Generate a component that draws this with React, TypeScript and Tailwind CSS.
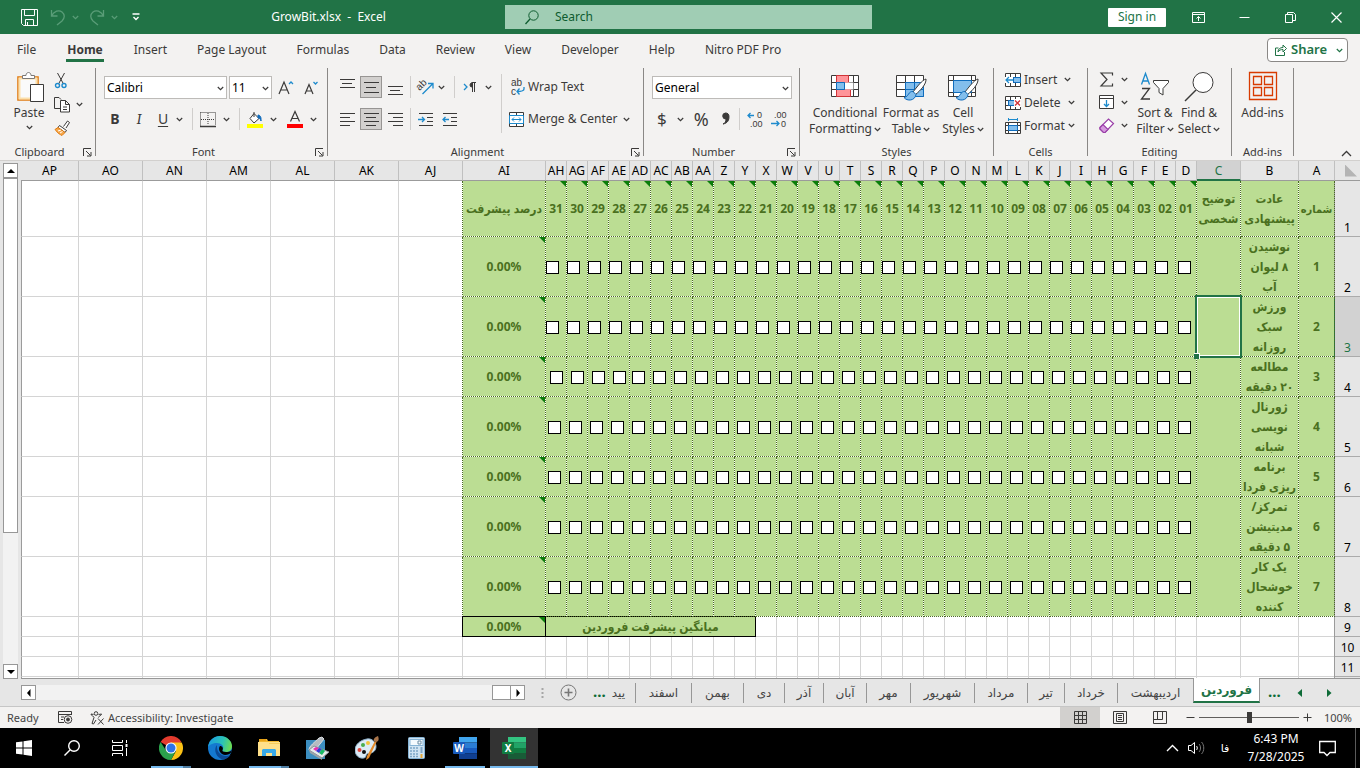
import type { ReactNode } from "react";
import { useState } from "react";

const DAY_COLS = ["D", "E", "F", "G", "H", "I", "J", "K", "L", "M", "N", "O", "P", "Q", "R", "S", "T", "U", "V", "W", "X", "Y", "Z", "AA", "AB", "AC", "AD", "AE", "AF", "AG", "AH"];
const EMPTY_COLS = ["AJ", "AK", "AL", "AM", "AN", "AO", "AP"];
const MENU = ["File", "Home", "Insert", "Page Layout", "Formulas", "Data", "Review", "View", "Developer", "Help", "Nitro PDF Pro"];

const HABITS = [
  { lines: ["نوشیدن", "۸ لیوان", "آب"], height: "h-[60px]", shift: "pl-0" },
  { lines: ["ورزش", "سبک", "روزانه"], height: "h-[60px]", shift: "pl-0" },
  { lines: ["مطالعه", "۲۰ دقیقه"], height: "h-[40px]", shift: "pl-[2px]" },
  { lines: ["ژورنال", "نویسی", "شبانه"], height: "h-[60px]", shift: "pl-[2px]" },
  { lines: ["برنامه", "ریزی فردا"], height: "h-[40px]", shift: "pl-[2px]" },
  { lines: ["تمرکز/", "مدیتیشن", "۵ دقیقه"], height: "h-[60px]", shift: "pl-[2px]" },
  { lines: ["یک کار", "خوشحال", "کننده"], height: "h-[60px]", shift: "pl-[2px]" },
];

const SHEETS = [
  { name: "اردیبهشت", width: "w-[76px]" },
  { name: "خرداد", width: "w-[53px]" },
  { name: "تیر", width: "w-[37px]" },
  { name: "مرداد", width: "w-[53px]" },
  { name: "شهریور", width: "w-[64px]" },
  { name: "مهر", width: "w-[44px]" },
  { name: "آبان", width: "w-[43px]" },
  { name: "آذر", width: "w-[39px]" },
  { name: "دی", width: "w-[41px]" },
  { name: "بهمن", width: "w-[52px]" },
  { name: "اسفند", width: "w-[56px]" },
];

const GREEN_CELL = "relative border-r border-b border-dotted border-[#4a6a24] bg-[#bbdd93] bg-clip-padding p-0 text-center align-middle font-bold text-[#4a7020]";
const PLAIN_CELL = "border-r border-b border-[#d4d4d4] p-0";

function Svg({ w, h, children, className = "" }: { w: number; h: number; children: ReactNode; className?: string }) {
  return (
    <svg width={w} height={h} viewBox={`0 0 ${w} ${h}`} fill="none" stroke="#3b3a39" className={`shrink-0 overflow-visible ${className}`} aria-hidden="true">
      {children}
    </svg>
  );
}

function Caret({ className = "" }: { className?: string }) {
  return (
    <Svg w={7} h={5} className={className}>
      <path d="M.8 1l2.7 2.7L6.2 1" stroke="currentColor" strokeWidth="1.2" />
    </Svg>
  );
}

function Glyph({ x, y, size = 9, children }: { x: number; y: number; size?: number; children: string }) {
  return (
    <text x={x} y={y} fontSize={size} fill="#3b3a39" stroke="none" fontFamily="Liberation Sans">
      {children}
    </text>
  );
}

function Sep() {
  return <div className="h-[22px] w-px shrink-0 bg-[#d0cecc]" />;
}

function Group({ label, width, launcher, children }: { label: string; width: string; launcher?: boolean; children: ReactNode }) {
  return (
    <section className={`flex shrink-0 items-start ${width}`} aria-label={label}>
      <div className="h-[92px] min-w-0 flex-1">
        <div className="h-[76px]">{children}</div>
        <div className="flex h-4 items-center text-[11px] leading-4">
          <span className="flex-1 text-center">{label}</span>
          {launcher && (
            <button aria-label={`${label} settings`} className="flex w-4 justify-center">
              <Svg w={9} h={9}>
                <path d="M.5 8V.5H8M3 3l4.500 4.500M8 4v4H4" />
              </Svg>
            </button>
          )}
        </div>
      </div>
      <div className="h-[88px] w-px bg-[#8a8886]" />
    </section>
  );
}

function BigButton({ lines, width, icon, caret = true }: { lines: string[]; width: string; icon: ReactNode; caret?: boolean }) {
  return (
    <button className={`flex flex-col items-center whitespace-nowrap pt-1 leading-4 ${width}`}>
      <span className="flex h-[33px] items-start">{icon}</span>
      {lines.map((line, i) => (
        <span key={line} className="flex items-center gap-0.5">
          {line}
          {caret && i === lines.length - 1 && <Caret />}
        </span>
      ))}
    </button>
  );
}

function AlignIcon({ rows }: { rows: string }) {
  return (
    <Svg w={15} h={14}>
      <path d={rows} />
    </Svg>
  );
}

function Brush() {
  return (
    <g>
      <path d="M30 7c-4 1-9 8-13 13l2.500 2.500c5-4 11-10.500 10.500-15.500z" fill="#fff" stroke="#3b3a39" />
      <path d="M17 19.500c-5-.5-4 5.500-9 6 3 4 11 3.500 12-3z" fill="#83beec" stroke="#0f6cbd" />
    </g>
  );
}

function TitleBar() {
  return (
    <header className="flex h-[34px] shrink-0 items-center bg-[#217346] text-white">
      <div className="flex w-[505px] shrink-0 items-center pl-[21px]">
        <button aria-label="Save">
          <Svg w={17} h={17}>
            <path d="M.5.5h16v16h-14l-2-2zM3.500.5v6h10v-6M4.500 16v-5.500h8V16M6.500 13v3" stroke="#fff" />
          </Svg>
        </button>
        <button aria-label="Undo" className="ml-3 flex items-center gap-1.5 text-[#5a9d78]">
          <Svg w={16} h={17}>
            <path d="M1.500 1v6h6M1.500 7C4 2 9 .5 12 3s3 6 0 9l-5 4" stroke="#5a9d78" strokeWidth="1.300" />
          </Svg>
          <Caret />
        </button>
        <button aria-label="Redo" className="ml-2.5 flex items-center gap-1.5 text-[#5a9d78]">
          <Svg w={16} h={17}>
            <path d="M14.500 1v6h-6M14.500 7C12 2 7 .5 4 3s-3 6 0 9l5 4" stroke="#5a9d78" strokeWidth="1.300" />
          </Svg>
          <Caret />
        </button>
        <button aria-label="Customize toolbar" className="ml-3.5">
          <Svg w={8} h={8}>
            <path d="M.5 1h7M1.500 4L4 6.500 6.500 4" stroke="#fff" strokeWidth="1.400" />
          </Svg>
        </button>
        <h1 className="flex-1 whitespace-pre pl-3 text-center text-[12px] font-normal">{"GrowBit.xlsx  -  Excel"}</h1>
      </div>
      <label className="flex h-6 w-[367px] shrink-0 items-center gap-4 bg-[#a0cdb4] pl-5">
        <Svg w={14} h={15}>
          <circle cx="8.500" cy="5.500" r="4.700" stroke="#0e5c2f" />
          <path d="M5 9L.5 14" stroke="#0e5c2f" strokeWidth="1.300" />
        </Svg>
        <input aria-label="Search" placeholder="Search" className="w-full bg-transparent text-[12px] text-[#0e5c2f] outline-none placeholder:text-[#0e5c2f]" />
      </label>
      <div className="ml-auto flex items-center pr-[18px]">
        <button className="h-[19px] w-[58px] rounded-[1px] bg-white text-[12px] leading-4 text-[#217346]">Sign in</button>
        <button aria-label="Ribbon display options" className="ml-[26px]">
          <Svg w={13} h={11}>
            <path d="M.5.5h12v10H.5zM.5 2.500h12M6.500 9V4.500M4.500 6.500l2-2 2 2" stroke="#fff" />
          </Svg>
        </button>
        <button aria-label="Minimize" className="ml-[34px]">
          <Svg w={11} h={11}>
            <path d="M.5 5.500h10" stroke="#fff" />
          </Svg>
        </button>
        <button aria-label="Restore" className="ml-[35px]">
          <Svg w={11} h={11}>
            <path d="M.5 2.500h7v8h-7zM2.500 2.500v-2h6l2 2v6h-3" stroke="#fff" />
          </Svg>
        </button>
        <button aria-label="Close" className="ml-[35px]">
          <Svg w={11} h={11}>
            <path d="M.5.5l10 10M10.500.5l-10 10" stroke="#fff" strokeWidth="1.200" />
          </Svg>
        </button>
      </div>
    </header>
  );
}

function Menu() {
  return (
    <nav className="flex h-8 shrink-0 items-center pl-[17px] pr-3 text-[12px]">
      <div className="flex gap-[30px]">
        {MENU.map((item) =>
          item === "Home" ? (
            <a key={item} href="#home" className="relative px-px font-bold leading-6">
              {item}
              <span className="absolute inset-x-0 bottom-0 h-[3px] bg-[#217346]" />
            </a>
          ) : (
            <a key={item} href={`#${item}`} className="leading-6">
              {item}
            </a>
          )
        )}
      </div>
      <button className="ml-auto flex h-6 w-[81px] items-center rounded border border-[#8a8886] bg-white pl-[7px] text-[13px] font-semibold text-[#217346]">
        <Svg w={12} h={12}>
          <path d="M3.500 4H.5v7.500h9V8M3 8c0-3 2-4.500 5-4.500V1l3.500 3.500L8 8V5.500C6 5.500 4 6 3 8z" stroke="#217346" />
        </Svg>
        <span className="ml-1">Share</span>
        <Caret className="ml-auto mr-1" />
      </button>
    </nav>
  );
}

function ClipboardGroup() {
  return (
    <Group label="Clipboard" width="w-[96px]" launcher>
      <div className="flex">
        <button className="flex w-[54px] flex-col items-center pl-1 pt-1 leading-4">
          <span className="flex h-[33px] pl-1">
            <Svg w={28} h={31}>
              <path d="M1 5h20v23H1z" fill="#fafafa" stroke="#e07b12" strokeWidth="1.600" />
              <path d="M2.500 6.500h17v20h-17z" stroke="#fbe0ac" strokeWidth="2" />
              <path d="M5.500 6.500v-3H9c0-4 5-4 5 0h3.500v3z" fill="#fff" stroke="#7a7977" />
              <path d="M13.500 12.500h13v17h-13z" fill="#fff" />
            </Svg>
          </span>
          Paste
          <Caret className="mt-1" />
        </button>
        <div>
          <button aria-label="Cut" className="flex h-6 items-center">
            <Svg w={14} h={17}>
              <path d="M3.500 1l6 11M10.500 1l-6 11" />
              <circle cx="3.500" cy="13.500" r="2" stroke="#1e8bcd" strokeWidth="1.400" />
              <circle cx="10" cy="13.500" r="2" stroke="#1e8bcd" strokeWidth="1.400" />
            </Svg>
          </button>
          <button aria-label="Copy" className="flex h-6 items-center gap-1.5">
            <Svg w={16} h={17}>
              <path d="M6 12.500H.5V1.500H5l2 2" />
              <path d="M6.500 4.500h5l4 4v7.500h-9zM11.500 4.500v4h4M9 11h4M9 13.500h4" fill="#fff" />
            </Svg>
            <Caret />
          </button>
          <button aria-label="Format Painter" className="flex h-6 items-center">
            <Svg w={16} h={16}>
              <path d="M9.500 6.500L13.500 1l2 1.500-3.500 5.500" fill="#fff" />
              <path d="M5.500 5.500l7 5-1.500 2-7-5z" fill="#fff" />
              <path d="M4 7.500L1 9.500c1 1 2 3.500 7 6l3-3z" fill="#f7a94c" stroke="#e07b12" />
              <path d="M4 11l3-1M6 13l2.500-1.500" stroke="#fff" />
            </Svg>
          </button>
        </div>
      </div>
    </Group>
  );
}

function FontGroup() {
  return (
    <Group label="Font" width="w-[232px]" launcher>
      <div className="flex flex-col gap-[9px] pl-2 pt-2">
        <div className="flex h-[23px] items-center">
          <div className="relative">
            <select aria-label="Font name" className="block h-[23px] w-[123px] appearance-none border border-[#bdbbb8] bg-white pl-0.5 text-black">
              <option>Calibri</option>
            </select>
            <Caret className="absolute right-[3px] top-[10px]" />
          </div>
          <div className="relative ml-0.5">
            <select aria-label="Font size" className="block h-[23px] w-[43px] appearance-none border border-[#bdbbb8] bg-white pl-0.5 text-black">
              <option>11</option>
            </select>
            <Caret className="absolute right-[3px] top-[10px]" />
          </div>
          <button aria-label="Increase font size" className="ml-1.5">
            <Svg w={16} h={16}>
              <path d="M1 14L6 2l5 12M2.500 10h7" strokeWidth="1.200" />
              <path d="M11 4l2-2 2 2" stroke="#1e8bcd" strokeWidth="1.300" />
            </Svg>
          </button>
          <button aria-label="Decrease font size" className="ml-2.5">
            <Svg w={16} h={16}>
              <path d="M1 14L5 4.500 9 14M2.500 11h5" strokeWidth="1.200" />
              <path d="M9.500 2l2 2 2-2" stroke="#1e8bcd" strokeWidth="1.300" />
            </Svg>
          </button>
        </div>
        <div className="flex h-[22px] items-center">
          <button className="w-[22px] text-[14px] font-bold leading-5">B</button>
          <button className="ml-0.5 w-[22px] font-serif text-[15px] italic leading-5">I</button>
          <button className="ml-0.5 w-[22px] text-[14px] leading-5 underline underline-offset-2">U</button>
          <Caret className="ml-0.5" />
          <span className="pl-[9px]"><Sep /></span>
          <button aria-label="Borders" className="ml-[7px] flex items-center gap-[7px]">
            <Svg w={16} h={15}>
              <path d="M.5.5h15v13M.5.5v13M8 1v12M1 7.500h14" strokeDasharray="1 1" />
              <path d="M0 14.500h16" strokeWidth="1.500" />
            </Svg>
            <Caret />
          </button>
          <span className="pl-[9px]"><Sep /></span>
          <button aria-label="Fill color" className="ml-[7px] flex items-center gap-[7px]">
            <Svg w={16} h={17}>
              <path d="M7 2.500l5 5-5 4.500-4-4.500zM7 6V1" fill="#fff" />
              <path d="M11 4c2 0 3.500 2 3 6-1-3-2-3-3-3z" fill="#0f6cbd" stroke="#0f6cbd" />
              <path d="M0 15h16" stroke="#ff0" strokeWidth="4" />
            </Svg>
            <Caret />
          </button>
          <button aria-label="Font color" className="ml-2.5 flex items-center gap-[7px]">
            <Svg w={16} h={17}>
              <path d="M3.500 10.500L8 .5l4.500 10M5 7.500h6" strokeWidth="1.200" />
              <path d="M0 15h16" stroke="red" strokeWidth="4" />
            </Svg>
            <Caret />
          </button>
        </div>
      </div>
    </Group>
  );
}

function AlignmentGroup() {
  return (
    <Group label="Alignment" width="w-[316px]" launcher>
      <div className="flex">
        <div className="flex w-[173px] flex-col gap-[10px] pl-2 pt-2">
          <div className="flex h-[22px] items-center">
            <button aria-label="Top align" className="flex h-[22px] w-[22px] justify-center"><AlignIcon rows="M0 3.500h15M2 7.500h10M0 11.500h15" /></button>
            <button aria-label="Middle align" className="ml-[2px] flex h-[22px] w-[22px] items-center justify-center border border-[#979593] bg-[#d2d0ce]"><AlignIcon rows="M0 2.500h15M2 7.500h10M0 12.500h15" /></button>
            <button aria-label="Bottom align" className="ml-[2px] flex h-[22px] w-[22px] items-end justify-center"><AlignIcon rows="M0 2.500h15M2 6.500h10M0 10.500h15" /></button>
            <span className="pl-1"><Sep /></span>
            <button aria-label="Orientation" className="ml-1.5 flex items-center gap-1">
              <Svg w={17} h={16}>
                <g transform="rotate(-45 6 7)"><Glyph x={0} y={8} size={10}>ab</Glyph></g>
                <path d="M5.500 15l10-10M11 4.500h5v5" stroke="#1e8bcd" strokeWidth="1.300" />
              </Svg>
              <Caret />
            </button>
            <span className="pl-[9px]"><Sep /></span>
            <button aria-label="Text direction" className="ml-2 flex items-center gap-2">
              <Svg w={14} h={10}>
                <path d="M1 2l3 3-3 3" stroke="#1e8bcd" strokeWidth="1.300" />
                <path d="M9 1a2 2 0 000 4z" fill="#3b3a39" />
                <path d="M9.500.5V10M11.500.5V10M8.500.5H13" />
              </Svg>
              <Caret />
            </button>
          </div>
          <div className="flex h-[22px] items-center">
            <button aria-label="Align left" className="flex h-[22px] w-[22px] items-center justify-center"><AlignIcon rows="M0 1.500h15M0 5.500h10M0 9.500h15M0 13.500h10" /></button>
            <button aria-label="Center" className="ml-[2px] flex h-[22px] w-[22px] items-center justify-center border border-[#979593] bg-[#d2d0ce]"><AlignIcon rows="M0 1.500h15M2 5.500h10M0 9.500h15M2 13.500h10" /></button>
            <button aria-label="Align right" className="ml-[2px] flex h-[22px] w-[22px] items-center justify-center"><AlignIcon rows="M0 1.500h15M5 5.500h10M0 9.500h15M5 13.500h10" /></button>
            <span className="pl-1"><Sep /></span>
            <button aria-label="Increase indent" className="ml-[7px]">
              <Svg w={16} h={14}>
                <path d="M1 1.500h14M9 5.500h6M9 9.500h6M1 13.500h14" />
                <path d="M0 7.500h6M4 5l2.500 2.500L4 10" stroke="#1e8bcd" strokeWidth="1.300" />
              </Svg>
            </button>
            <button aria-label="Decrease indent" className="ml-2">
              <Svg w={16} h={14}>
                <path d="M1 1.500h14M9 5.500h6M9 9.500h6M1 13.500h14" />
                <path d="M1 7.500h6M3.500 5L1 7.500 3.500 10" stroke="#1e8bcd" strokeWidth="1.300" />
              </Svg>
            </button>
          </div>
        </div>
        <div className="mt-1.5 h-[59px] w-px bg-[#d0cecc]" />
        <div className="flex flex-col gap-[10px] pl-[7px] pt-2">
          <button className="flex h-[22px] items-center gap-[3px]">
            <Svg w={16} h={18}>
              <Glyph x={2} y={8} size={10}>ab</Glyph>
              <Glyph x={2} y={17} size={10}>c</Glyph>
              <path d="M15 9v2c0 2-2 2.500-7 2.500M10.500 10.500L8 13.500l2.500 3" stroke="#1e8bcd" strokeWidth="1.300" />
            </Svg>
            Wrap Text
          </button>
          <button className="flex h-[22px] items-center gap-[3px]">
            <Svg w={16} h={15}>
              <path d="M.5.5h14v14H.5zM.5 3.500h14M.5 11.500h14M7.500.5v3M7.500 11.500v3" fill="#fff" />
              <path d="M.5 3.500h14v8H.5zM3 7.500h9M5 5.500l-2 2 2 2M10 5.500l2 2-2 2" stroke="#1e8bcd" />
            </Svg>
            Merge &amp; Center
            <Caret className="ml-0.5" />
          </button>
        </div>
      </div>
    </Group>
  );
}

function NumberGroup() {
  return (
    <Group label="Number" width="w-[156px]" launcher>
      <div className="flex flex-col gap-[9px] pl-2 pt-2">
        <div className="relative w-[140px]">
          <select aria-label="Number format" className="block h-[23px] w-full appearance-none border border-[#bdbbb8] bg-white pl-0.5 text-black">
            <option>General</option>
          </select>
          <Caret className="absolute right-[3px] top-[10px]" />
        </div>
        <div className="flex h-[22px] items-center">
          <button aria-label="Accounting format" className="flex items-center pl-[5px] text-[17px] leading-5">
            $<Caret className="ml-2.5" />
          </button>
          <button className="ml-2.5 text-[18px] leading-5">%</button>
          <button aria-label="Comma style" className="ml-3">
            <Svg w={9} h={14}>
              <path d="M4.500 1a3 3 0 10.500 6c0 3-1 4-3 5 5-1 6-4 6-7.500C8 2 6.500 1 4.500 1z" fill="#3b3a39" />
            </Svg>
          </button>
          <span className="pl-[9px]"><Sep /></span>
          <button aria-label="Increase decimal" className="ml-[7px]">
            <Svg w={17} h={17}>
              <Glyph x={10} y={7}>0</Glyph>
              <Glyph x={3} y={16}>.00</Glyph>
              <path d="M1 4.500h6M3.500 2L1 4.500 3.500 7" stroke="#1e8bcd" strokeWidth="1.300" />
            </Svg>
          </button>
          <button aria-label="Decrease decimal" className="ml-[7px]">
            <Svg w={17} h={17}>
              <Glyph x={3} y={7}>.00</Glyph>
              <Glyph x={10} y={16}>0</Glyph>
              <path d="M0 12.500h8M5.500 10L8 12.500 5.500 15" stroke="#1e8bcd" strokeWidth="1.300" />
            </Svg>
          </button>
        </div>
      </div>
    </Group>
  );
}

function StylesGroup() {
  return (
    <Group label="Styles" width="w-[194px]">
      <div className="flex pl-[5px]">
        <BigButton
          lines={["Conditional", "Formatting"]}
          width="w-[80px]"
          icon={
            <Svg w={28} h={26}>
              <path d="M.5 3.500h27v21H.5zM.5 10.500h27M.5 17.500h27M5.500 3.500v21M22.500 3.500v21" fill="#fff" />
              <path d="M5.500 3.500h12v7h-12zM5.500 17.500h14v7h-14z" fill="#ff9499" stroke="#d13438" />
              <path d="M5.500 10.500h8v7h-8z" fill="#83beec" stroke="#0f6cbd" />
              <path d="M14 10.500h8.500v7H14z" fill="#fff" stroke="none" />
            </Svg>
          }
        />
        <BigButton
          lines={["Format as", "Table"]}
          width="w-[52px]"
          icon={
            <Svg w={31} h={31}>
              <path d="M.5 3.500h27v21H.5zM.5 10.500h27M.5 17.500h27M9.500 3.500v21M18.500 3.500v21" fill="#fff" />
              <path d="M9.500 10.500h18v14h-18zM9.500 17.500h18M18.500 10.500v14" fill="#83beec" stroke="#0f6cbd" />
              <Brush />
            </Svg>
          }
        />
        <BigButton
          lines={["Cell", "Styles"]}
          width="w-[52px]"
          icon={
            <Svg w={31} h={31}>
              <path d="M.5 3.500h27v21H.5zM.5 8.500h27M5.500 3.500v21M23.500 3.500v21M.5 20.500h27" fill="#fff" />
              <path d="M5.500 8.500h18v12h-18z" fill="#83beec" stroke="#0f6cbd" />
              <Brush />
            </Svg>
          }
        />
      </div>
    </Group>
  );
}

function CellsGroup() {
  return (
    <Group label="Cells" width="w-[94px]">
      <div className="pl-[11px]">
        <button className="flex h-[23px] items-center gap-[3px]">
          <Svg w={16} h={14}>
            <path d="M.5.5h15v13H.5zM.5 4.500h15M.5 9.500h15M5.500.5v13M10.500.5v13" fill="#fff" />
            <path d="M8.500 4.500h7v5h-7z" fill="#83beec" stroke="#0f6cbd" />
            <path d="M0 4h8v6H0z" fill="#fff" stroke="none" />
            <path d="M1 7h7M4 4L1 7l3 3" stroke="#1e8bcd" strokeWidth="1.300" />
          </Svg>
          Insert
          <Caret className="ml-1" />
        </button>
        <button className="flex h-[23px] items-center gap-[3px]">
          <Svg w={16} h={14}>
            <path d="M.5.5h15v13H.5zM.5 4.500h15M.5 9.500h15M5.500.5v13M10.500.5v13" fill="#fff" />
            <path d="M3.500 4.500h6v5h-6z" fill="#83beec" stroke="#0f6cbd" />
            <path d="M9 3h7v8H9z" fill="#fff" stroke="none" />
            <path d="M10 4.500l5 5M15 4.500l-5 5" stroke="#d13438" strokeWidth="1.300" />
          </Svg>
          Delete
          <Caret className="ml-1" />
        </button>
        <button className="flex h-[23px] items-center gap-[3px]">
          <Svg w={16} h={16}>
            <path d="M.5 4.500h15v11H.5zM.5 7.500h15M.5 12.500h15M3.500 4.500v11M12.500 4.500v11" fill="#fff" />
            <path d="M3.500 7.500h9v5h-9z" fill="#83beec" stroke="#0f6cbd" />
            <path d="M3 1.500h10M3.500 0v3M12.500 0v3" stroke="#1e8bcd" />
          </Svg>
          Format
          <Caret />
        </button>
      </div>
    </Group>
  );
}

function EditingGroup() {
  return (
    <Group label="Editing" width="w-[144px]">
      <div className="flex">
        <div className="w-[45px] pl-[11px]">
          <button aria-label="AutoSum" className="flex h-[23px] items-center gap-1.5">
            <Svg w={16} h={15}>
              <path d="M13.500 3.500v-2.500H2l6 6.500-6 6.500h11.500v-2.500" strokeWidth="1.200" />
            </Svg>
            <Caret />
          </button>
          <button aria-label="Fill" className="flex h-[23px] items-center gap-1.5">
            <Svg w={16} h={15}>
              <path d="M.5.5h14v13H.5zM.5 3.500h14" fill="#fff" />
              <path d="M7.500 5v6.500M5 9l2.500 2.500L10 9" stroke="#1e8bcd" strokeWidth="1.300" />
            </Svg>
            <Caret />
          </button>
          <button aria-label="Clear" className="flex h-[23px] items-center gap-1.5">
            <Svg w={16} h={16}>
              <path d="M1 9.500L9.500 1l5 4.500L6 14.500H4.500L1 11z" fill="#fff" stroke="#9a3fa8" strokeWidth="1.200" />
              <path d="M1 9.500l3-3 5 5-3 3H4.500L1 11z" fill="#d59ade" stroke="#9a3fa8" strokeWidth="1.200" />
            </Svg>
            <Caret />
          </button>
        </div>
        <BigButton
          lines={["Sort &", "Filter"]}
          width="w-[44px]"
          icon={
            <Svg w={30} h={29}>
              <path d="M1.500 12.500l4-11 4 11M3 9h5" stroke="#1e8bcd" strokeWidth="1.300" />
              <path d="M2 16.500h7.500L1.500 27H10" strokeWidth="1.300" />
              <path d="M13.500 8.500h15v2l-5.500 6v6.500l-4-2.500v-4l-5.500-6z" fill="#fff" />
            </Svg>
          }
        />
        <BigButton
          lines={["Find &", "Select"]}
          width="w-[44px]"
          icon={
            <Svg w={30} h={31}>
              <circle cx="19" cy="10.500" r="10" fill="#fff" />
              <path d="M12 18L1 29" strokeWidth="1.400" />
            </Svg>
          }
        />
      </div>
    </Group>
  );
}

function Ribbon() {
  return (
    <div className="flex h-[95px] shrink-0 border-b border-[#d2d0ce] pt-0.5 text-[12px]">
      <ClipboardGroup />
      <FontGroup />
      <AlignmentGroup />
      <NumberGroup />
      <StylesGroup />
      <CellsGroup />
      <EditingGroup />
      <Group label="Add-ins" width="w-[62px]">
        <BigButton
          lines={["Add-ins"]}
          width="w-full"
          caret={false}
          icon={
            <Svg w={28} h={28}>
              <path d="M.5.5h27v27H.5zM4.500 4.500h8v8h-8zM15.500 4.500h8v8h-8zM4.500 15.500h8v8h-8zM15.500 15.500h8v8h-8z" stroke="#d83b01" strokeWidth="1.300" />
            </Svg>
          }
        />
      </Group>
      <button aria-label="Collapse ribbon" className="mb-[3px] ml-auto mr-2 self-end">
        <Svg w={11} h={7}>
          <path d="M1 6l4.500-4.500L10 6" strokeWidth="1.300" />
        </Svg>
      </button>
    </div>
  );
}

function ErrorMark() {
  return <span className="absolute right-0 top-0 h-[6px] w-[6px] bg-[#0a7d0a] [clip-path:polygon(0_0,100%_0,100%_100%)]" />;
}

function EmptyCells({ green }: { green?: boolean }) {
  return (
    <>
      {EMPTY_COLS.map((col) => (
        <td
          key={col}
          className={
            col === "AP"
              ? `${PLAIN_CELL} border-l border-l-[#9b9b9b]`
              : green && col === "AJ"
                ? "border-r border-b border-[#d4d4d4] border-r-[#4a6a24] p-0 [border-right-style:dotted]"
                : PLAIN_CELL
          }
        />
      ))}
    </>
  );
}

function RowHeader({ n, active }: { n: number; active?: boolean }) {
  return (
    <th
      scope="row"
      className={
        active
          ? "relative border-b border-[#ababab] bg-[#d2d2d2] p-0 align-bottom text-[12px] font-normal leading-4 text-[#217346] shadow-[-2px_0_0_#217346]"
          : "relative border-b border-[#ababab] bg-[#e6e6e6] p-0 align-bottom text-[12px] font-normal leading-4 text-black shadow-[-1px_0_0_#9b9b9b]"
      }
    >
      {n > 11 ? "" : n}
    </th>
  );
}

function Grid() {
  const [checked, setChecked] = useState<Record<string, boolean>>({});
  const head = "border-r border-b border-r-[#c0c0c0] border-b-[#9b9b9b] bg-[#e6e6e6] p-0 text-center font-normal";

  return (
    <table dir="rtl" className="w-full table-fixed border-separate border-spacing-0 bg-white font-['Noto_Sans','DejaVu_Sans_Condensed','DejaVu_Sans',sans-serif] text-[12px] leading-[18px]">
      <colgroup>
        <col className="w-[25px]" />
        <col className="w-[36px]" />
        <col className="w-[58px]" />
        <col className="w-[44px]" />
        {DAY_COLS.map((c) => (
          <col key={c} className="w-[21px]" />
        ))}
        <col className="w-[83px]" />
        {EMPTY_COLS.map((c) => (
          <col key={c} className={c === "AP" ? "" : "w-[64px]"} />
        ))}
      </colgroup>
      <thead>
        <tr className="h-5 text-black">
          <th className="border-b border-[#9b9b9b] bg-[#e6e6e6] p-0" aria-label="Select all">
            <span className="ml-auto mr-[3px] block h-3 w-3 bg-[#b4b4b4] [clip-path:polygon(0_0,0_100%,100%_100%)]" />
          </th>
          <th className={head}>A</th>
          <th className={head}>B</th>
          <th className="border-r border-b-2 border-r-[#c0c0c0] border-b-[#217346] bg-[#d2d2d2] p-0 text-center font-normal leading-[17px] text-[#217346]">C</th>
          {DAY_COLS.map((c) => (
            <th key={c} className={head}>
              <span className="-mx-1">{c}</span>
            </th>
          ))}
          <th className={head}>AI</th>
          {EMPTY_COLS.map((c) => (
            <th key={c} className={head}>{c}</th>
          ))}
        </tr>
      </thead>
      <tbody>
        <tr className="h-[56px]">
          <RowHeader n={1} />
          <td className={`${GREEN_CELL} text-[11px]`}>شماره</td>
          <td className={`${GREEN_CELL} leading-5`}>عادت<br />پیشنهادی</td>
          <td className={`${GREEN_CELL} leading-5`}>توضیح<br />شخصی</td>
          {DAY_COLS.map((c, i) => (
            <td key={c} className={GREEN_CELL}>
              <ErrorMark />
              {String(i + 1).padStart(2, "0")}
            </td>
          ))}
          <td className={`${GREEN_CELL} whitespace-nowrap`}>درصد پیشرفت</td>
          <EmptyCells green />
        </tr>
        {HABITS.map((habit, row) => (
          <tr key={row} className={habit.height}>
            <RowHeader n={row + 2} active={row === 1} />
            <td className={GREEN_CELL}>{row + 1}</td>
            <td className={`${GREEN_CELL} whitespace-nowrap`}>
              <div className="-my-px leading-5">
                {habit.lines.map((line) => (
                  <div key={line}>{line}</div>
                ))}
              </div>
            </td>
            <td className={GREEN_CELL}>
              {row === 1 && (
                <div className="absolute -inset-0.5 z-10 border-2 border-[#217346] shadow-[inset_0_0_0_1px_#fff]">
                  <span className="absolute -bottom-[3px] -left-[3px] h-[6px] w-[6px] border-r border-t border-white bg-[#217346]" />
                </div>
              )}
            </td>
            {DAY_COLS.map((c, i) => {
              const id = `${c}${row + 2}`;
              const shift = i === 0 ? "pl-[2px]" : row === 2 && i > 26 ? "pl-[4px]" : habit.shift;
              return (
                <td key={c} className={GREEN_CELL}>
                  <div dir="ltr" className={`flex pt-0.5 ${shift}`}>
                    <input
                      type="checkbox"
                      aria-label={id}
                      checked={!!checked[id]}
                      onChange={(e) => setChecked({ ...checked, [id]: e.target.checked })}
                      className="block h-[13px] w-[13px] shrink-0 appearance-none border border-black bg-white checked:bg-black"
                    />
                  </div>
                </td>
              );
            })}
            <td className={GREEN_CELL}>
              <ErrorMark />
              <span dir="ltr">0.00%</span>
            </td>
            <EmptyCells green />
          </tr>
        ))}
        <tr className="h-5">
          <RowHeader n={9} />
          {["A", "B", "C", ...DAY_COLS.slice(0, 21)].map((c) => (
            <td key={c} className={PLAIN_CELL} />
          ))}
          <td colSpan={10} className="border-r border-b border-black bg-[#bbdd93] p-0 text-center font-bold text-[#4a7020] shadow-[0_-1px_0_#000]">
            <div className="-my-px leading-5">میانگین پیشرفت فروردین</div>
          </td>
          <td className="relative border-r border-b border-black bg-[#bbdd93] p-0 text-center font-bold text-[#4a7020] shadow-[-1px_-1px_0_#000,-1px_0_0_#000,0_-1px_0_#000]">
            <ErrorMark />
            <span dir="ltr">0.00%</span>
          </td>
          <EmptyCells />
        </tr>
        {[10, 11, 12].map((n) => (
          <tr key={n} className="h-5">
            <RowHeader n={n} />
            {["A", "B", "C", ...DAY_COLS, "AI"].map((c) => (
              <td key={c} className={PLAIN_CELL} />
            ))}
            <EmptyCells />
          </tr>
        ))}
      </tbody>
    </table>
  );
}

const SCROLL_BTN = "flex h-[15px] w-[15px] shrink-0 items-center justify-center border border-[#979797] bg-white";

function Arrow({ d }: { d: string }) {
  return (
    <Svg w={8} h={8}>
      <path d={d} fill="currentColor" stroke="none" />
    </Svg>
  );
}

function SheetTabs() {
  return (
    <div dir="rtl" className="flex h-7 shrink-0 border-b border-[#c6c6c6] bg-[#e6e6e6] text-[12px] text-[#444]">
      <div className="flex w-[100px] shrink-0 items-center pr-[27px] text-[#0e6b37]">
        <button aria-label="Previous sheet"><Arrow d="M2 0v8l4.500-4z" /></button>
        <button aria-label="Next sheet" className="mr-[21px]"><Arrow d="M6 0v8L1.500 4z" /></button>
        <span className="mr-auto pb-1 pl-2 text-[15px] font-bold leading-4">...</span>
      </div>
      <button className="-mt-px h-[25px] w-[67px] shrink-0 border-x border-b-2 border-x-[#979797] border-b-[#217346] bg-white font-bold leading-5 text-[#217346]">فروردین</button>
      {SHEETS.map((s) => (
        <button key={s.name} className={`mt-1 h-5 shrink-0 border-l border-[#979797] leading-4 ${s.width}`}>
          {s.name}
        </button>
      ))}
      <button className="mt-1 h-5 shrink-0 pr-2.5 leading-4">یید</button>
      <div className="mr-1.5 flex items-center gap-4">
        <span className="pb-1 text-[15px] font-bold leading-4 text-[#0e6b37]">...</span>
        <button aria-label="New sheet">
          <Svg w={17} h={17}>
            <circle cx="8.500" cy="8.500" r="7.500" stroke="#767676" />
            <path d="M8.500 4.500v8M4.500 8.500h8" stroke="#767676" strokeWidth="1.600" />
          </Svg>
        </button>
        <Svg w={3} h={12}>
          <path d="M1.500 1v2M1.500 5v2M1.500 9v2" stroke="#a6a6a6" strokeWidth="2" />
        </Svg>
      </div>
      <div dir="ltr" className="my-auto mr-4 ml-[21px] flex h-[15px] flex-1 bg-[#f2f2f2] text-black">
        <button aria-label="Scroll left" className={SCROLL_BTN}><Arrow d="M5.500 0v8L2 4z" /></button>
        <div className="ml-auto h-[15px] w-[18px] border border-r-0 border-[#979797] bg-white" />
        <button aria-label="Scroll right" className={SCROLL_BTN}><Arrow d="M2.500 0v8L6 4z" /></button>
      </div>
    </div>
  );
}

function StatusBar() {
  return (
    <footer className="flex h-[21px] shrink-0 items-center text-[11px] leading-4 text-[#444]">
      <span className="w-[58px] pl-[7px]">Ready</span>
      <Svg w={15} h={13}>
        <path d="M13.500 4V.5H.5v11H6M.5 3.500h13M3 6h3M3 8.500h2" />
        <circle cx="10" cy="8.500" r="3.800" />
        <circle cx="10" cy="8.500" r="1.500" fill="#3b3a39" />
      </Svg>
      <button className="ml-[17px] flex items-center gap-1">
        <Svg w={14} h={14}>
          <circle cx="6" cy="2.500" r="1.800" />
          <path d="M1 3c0 2 3 2 3 3.500L2 12.500l1.500.5L6 9M11.500 3c-.5 2-3 2-3 3.500M1 3l2.500.5M8.500 3.500l3-.5" />
          <path d="M8 7.500l5.500 6M13.500 7.500l-5.500 6" />
        </Svg>
        Accessibility: Investigate
      </button>
      <div className="ml-auto flex h-full items-center">
        <button aria-label="Normal view" className="flex h-full w-10 items-center justify-center bg-[#d2d0ce]">
          <Svg w={13} h={13}>
            <path d="M.5.5h12v12H.5zM.5 4.500h12M.5 8.500h12M4.500.5v12M8.500.5v12" />
          </Svg>
        </button>
        <button aria-label="Page layout view" className="flex w-10 justify-center">
          <Svg w={14} h={13}>
            <path d="M.5.5h13v12H.5zM3.500 2.500h7v8h-7zM5 4.500h4M5 6.500h4M5 8.500h4" />
          </Svg>
        </button>
        <button aria-label="Page break view" className="flex w-10 justify-center">
          <Svg w={14} h={13}>
            <path d="M.5.5h13v12H.5zM4.500.5v8M9.500.5v8M.5 8.500h9" />
          </Svg>
        </button>
        <button aria-label="Zoom out" className="ml-1.5">
          <Svg w={9} h={9}><path d="M.5 4.500h8" /></Svg>
        </button>
        <input
          type="range"
          aria-label="Zoom"
          defaultValue={50}
          className="mx-1 h-3 w-[100px] appearance-none bg-[linear-gradient(#605e5c,#605e5c)] bg-[length:100%_1px] bg-center bg-no-repeat [&::-webkit-slider-thumb]:h-[11px] [&::-webkit-slider-thumb]:w-[5px] [&::-webkit-slider-thumb]:appearance-none [&::-webkit-slider-thumb]:bg-[#3b3a39]"
        />
        <button aria-label="Zoom in">
          <Svg w={9} h={9}><path d="M.5 4.500h8M4.500.5v8" /></Svg>
        </button>
        <span className="w-12 pr-2 text-right">100%</span>
      </div>
    </footer>
  );
}

function OfficeIcon({ letter, shades, tile }: { letter: string; shades: string[]; tile: string }) {
  return (
    <svg width="24" height="22" viewBox="0 0 24 22" aria-hidden="true">
      {shades.map((shade, i) => (
        <rect key={shade} x="6" y={i * 5.5} width="18" height="5.500" fill={shade} />
      ))}
      <rect x="0" y="5" width="12" height="12" rx="1" fill={tile} />
      <text x="6" y="14.500" textAnchor="middle" fontSize="10" fontWeight="700" fill="#fff">{letter}</text>
    </svg>
  );
}

const TASKS: { name: string; bar?: string; icon: ReactNode }[] = [
  {
    name: "Chrome",
    bar: "w-10",
    icon: (
      <svg width="24" height="24" viewBox="0 0 24 24" aria-hidden="true">
        <path d="M12 12L1.600 6A12 12 0 0122.400 6z" fill="#e33b2e" />
        <path d="M12 6.500h10.700A12 12 0 0112 24l5-9z" fill="#fbc116" />
        <path d="M7.200 14.700L1.600 6a12 12 0 0010.400 18l4.700-9z" fill="#2ba24c" />
        <circle cx="12" cy="12" r="5.600" fill="#fff" />
        <circle cx="12" cy="12" r="4.500" fill="#2f74e8" />
      </svg>
    ),
  },
  {
    name: "Edge",
    icon: (
      <svg width="24" height="24" viewBox="0 0 24 24" aria-hidden="true">
        <defs>
          <linearGradient id="edgeTop" x1="0" x2="1" y1=".3" y2=".5">
            <stop offset="0" stopColor="#1b9de2" />
            <stop offset=".6" stopColor="#2bc3b6" />
            <stop offset="1" stopColor="#6ddc4f" />
          </linearGradient>
        </defs>
        <circle cx="12" cy="12" r="12" fill="#1479d0" />
        <path d="M0 11C1 4 6 0 12 0c7 0 12 5 12 10 0 4-3 6-6 6s-4-1-3.500-2C17 10 13 7 9 7c-4 0-8 2-9 4z" fill="url(#edgeTop)" />
        <path d="M9 9c-4 4-1 14 7 14.500 3-.5 5-2.500 6.500-4.500C16 22 8 18 9 9z" fill="#0b4a96" />
        <path d="M12 10c-2 2-1 8 5 9 3 0 5-1 6-2.500l1-2.500c-2 2-4 2-6 2-3 0-4-1-3.500-2 1-1.500 0-4-2.500-4z" fill="#000" />
      </svg>
    ),
  },
  {
    name: "File Explorer",
    bar: "w-10",
    icon: (
      <svg width="22" height="20" viewBox="0 0 22 20" aria-hidden="true">
        <path d="M1 1h8l1 2h11v5H1z" fill="#f2b72f" />
        <path d="M1 1h7v2H1z" fill="#e8a317" />
        <path d="M0 4h22v14H0z" fill="#ffe08a" />
        <path d="M4 18v-6l1-1h12l1 1v6h-4v-3H8v3z" fill="#38a9e8" />
        <path d="M11 5h11v1H11z" fill="#f7cd5c" />
      </svg>
    ),
  },
  {
    name: "Scan",
    icon: (
      <svg width="24" height="24" viewBox="0 0 24 24" aria-hidden="true">
        <rect x="0" y="4" width="19" height="19" fill="#3c8ec0" />
        <path d="M3 14c0-4 6-8 10-12l3-1 2 2-8 10z" fill="#b5bcc1" stroke="#d9dde0" />
        <path d="M3 14l5-4 15 6-7 6z" fill="#e7eaec" stroke="#8b9298" />
        <path d="M7 13l3-2 3 1-3 3z" fill="#e72fb0" />
        <path d="M10 15l3-3 3 1-3 4z" fill="#3538d6" />
        <path d="M13 17l3-4 3 2-3 4z" fill="#19b964" />
        <path d="M3 14l13 8v2L4 17z" fill="#9ba3a8" />
      </svg>
    ),
  },
  {
    name: "Paint",
    icon: (
      <svg width="24" height="24" viewBox="0 0 24 24" aria-hidden="true">
        <path d="M12 3C5 4 0 9 0 14s4 9 9 8c3-.5 1-4 4-4.500 5 0 8-3 8-7S17 2 12 3z" fill="#dcebf5" stroke="#8fb3cd" />
        <circle cx="4.500" cy="14" r="2" fill="#e2483d" />
        <circle cx="8" cy="9" r="2" fill="#4bae4f" />
        <circle cx="13" cy="7" r="2" fill="#f3c43b" />
        <circle cx="9" cy="16" r="2" fill="#111" />
        <path d="M20 5l1.500 1L14 22l-3 2 1-4z" fill="#e38b2c" />
        <path d="M19 5c-1-2 1-4 4-5 1 3 1 5-1.500 6z" fill="#a8744a" />
      </svg>
    ),
  },
  {
    name: "Calculator",
    icon: (
      <svg width="17" height="22" viewBox="0 0 17 22" aria-hidden="true">
        <rect x=".5" y=".5" width="16" height="21" rx="1" fill="#cfe3f2" stroke="#86b4d6" />
        <rect x="2" y="2.500" width="13" height="6" fill="#f4fafe" stroke="#86b4d6" />
        <path d="M10 4h3v3h-3z" fill="none" stroke="#6b8ba3" />
        <path d="M2 11h9M2 14h9M2 17h9M2 19.500h9" stroke="#7ea6c6" strokeWidth="1.600" strokeDasharray="2 1" />
        <path d="M13.500 10v6" stroke="#7ea6c6" strokeWidth="2" />
        <path d="M13.500 17v4" stroke="#e5a93a" strokeWidth="2" />
      </svg>
    ),
  },
  { name: "Word", bar: "w-10", icon: <OfficeIcon letter="W" shades={["#41a5ee", "#2b7cd3", "#185abd", "#103f91"]} tile="#185abd" /> },
  { name: "Excel", bar: "w-12", icon: <OfficeIcon letter="X" shades={["#33c481", "#21a366", "#107c41", "#185c37"]} tile="#107c41" /> },
];

function Taskbar() {
  return (
    <div className="flex h-10 shrink-0 items-center bg-black text-white">
      <button aria-label="Start" className="flex w-12 justify-center">
        <Svg w={16} h={16}>
          <path d="M0 2.300L6.500 1.400v6.100H0zM7.500 1.200L16 0v7.500H7.500zM0 8.500h6.500v6.100L0 13.700zM7.500 8.500H16V16l-8.500-1.200z" fill="#fff" stroke="none" />
        </Svg>
      </button>
      <button aria-label="Search" className="flex w-12 justify-center">
        <Svg w={16} h={16}>
          <circle cx="10" cy="6" r="5.300" stroke="#fff" strokeWidth="1.400" />
          <path d="M6 10L.5 15.500" stroke="#fff" strokeWidth="1.500" />
        </Svg>
      </button>
      <button aria-label="Task View" className="flex w-12 justify-center">
        <Svg w={16} h={16}>
          <path d="M.5 0v2.500h10V0M.5 5.500h10v5H.5zM.5 16v-2.500h10V16M14.500 0v3M14.500 8v8" stroke="#fff" />
          <path d="M13.500 4h2v3h-2z" fill="#fff" stroke="none" />
        </Svg>
      </button>
      <div className="ml-[3px] flex h-full gap-px">
        {TASKS.map((task) => (
          <button
            key={task.name}
            aria-label={task.name}
            className={task.name === "Excel" ? "relative flex w-12 items-center justify-center bg-[#333]" : "relative flex w-12 items-center justify-center"}
          >
            {task.icon}
            {task.bar && (
              <span className={`absolute inset-x-0 bottom-0 mx-auto flex h-0.5 justify-end bg-[#76b9ed] ${task.bar}`}>
                {(task.name === "Chrome" || task.name === "File Explorer") && <span className="w-2 bg-[#4f7ea3]" />}
              </span>
            )}
          </button>
        ))}
      </div>
      <div className="ml-auto flex h-full items-center text-[12px] leading-[18px]">
        <button aria-label="Show hidden icons">
          <Svg w={13} h={8}><path d="M1 7l5.500-5.500L12 7" stroke="#fff" strokeWidth="1.400" /></Svg>
        </button>
        <button aria-label="Volume" className="ml-[9px]">
          <Svg w={17} h={14}>
            <path d="M.5 4.500H3L6.500 1.500v11L3 9.500H.5z" stroke="#fff" />
            <path d="M8.500 5c1 1 1 3 0 4" stroke="#fff" />
            <path d="M11 3c2 2 2 6 0 8M13.500 1c3 3 3 9 0 12" stroke="#777" />
          </Svg>
        </button>
        <button aria-label="Input language" className="w-10 text-center text-[11px]">فا</button>
        <button className="w-[62px] text-center">
          6:43 PM
          <br />
          7/28/2025
        </button>
        <button aria-label="Notifications" className="ml-3">
          <Svg w={17} h={17}>
            <path d="M.7 1.500h15.600v11H11l-3 3-3-3H.7z" stroke="#fff" strokeWidth="1.300" />
          </Svg>
        </button>
        <div className="ml-[19px] mr-1 h-full w-px bg-[#5a5a5a]" />
      </div>
    </div>
  );
}

export default function App() {
  return (
    <div className="flex h-screen flex-col overflow-hidden bg-[#f3f2f1] font-['Noto_Sans','DejaVu_Sans',sans-serif] text-[#3b3a39]">
      <TitleBar />
      <Menu />
      <Ribbon />
      <main className="flex min-h-0 flex-1">
        <div className="flex w-[21px] shrink-0 flex-col bg-[#e6e6e6] pl-[3px] pt-0.5 text-black">
          <button aria-label="Scroll up" className={SCROLL_BTN}><Arrow d="M0 6h8L4 2z" /></button>
          <div className="flex w-[15px] flex-1 flex-col bg-[#f2f2f2]">
            <div className="h-[73%] border border-[#979797] bg-white" />
          </div>
          <button aria-label="Scroll down" className={SCROLL_BTN}><Arrow d="M0 2h8L4 6z" /></button>
        </div>
        <div className="min-w-0 flex-1 overflow-hidden border-b border-[#979797]">
          <Grid />
        </div>
      </main>
      <SheetTabs />
      <StatusBar />
      <Taskbar />
    </div>
  );
}
